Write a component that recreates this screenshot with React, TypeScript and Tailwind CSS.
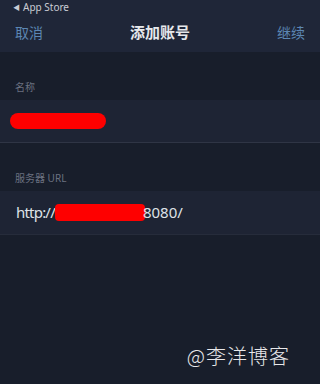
import React from 'react';

// ---------------- Component ----------------
const App: React.FC = () => {
    return (
        <div
            className="w-[322px] h-[387px] bg-white flex flex-col"
            style={{ fontFamily: '"Noto Sans", "Noto Sans CJK SC", sans-serif' }}
        >
            <div className="w-[320px] h-[384px] bg-[#181e2b] flex flex-col overflow-hidden">
                {/* Status + Nav */}
                <div className="bg-[#1f2638] h-[52px] flex flex-col">
                    <div className="h-[14px] flex items-center pl-[13px] text-[10px] leading-none text-[#c9ccd4]">
                        <span className="text-[7px] mr-[3px]">◀</span>
                        App Store
                    </div>
                    <div className="flex-1 flex items-center justify-between px-[15px] pt-[1px] pb-[2px]">
                        <span className="text-[14px] text-[#5c86b3]">取消</span>
                        <span className="text-[15px] font-semibold text-[#e6e8ec]">添加账号</span>
                        <span className="text-[14px] text-[#5c86b3]">继续</span>
                    </div>
                </div>

                {/* Name section */}
                <div className="h-[48px] flex items-end pl-[15px] pb-[5px] text-[10px] text-[#6b7180]">
                    名称
                </div>
                <div className="h-[43px] bg-[#1e2434] border-b border-[#2f3545] flex items-center pl-[10px]">
                    <div className="w-[96px] h-[16px] rounded-full bg-[#fe0000]" />
                </div>

                {/* Server URL section */}
                <div className="h-[48px] flex items-end pl-[15px] pb-[5px] text-[10px] text-[#6b7180]">
                    服务器 URL
                </div>
                <div className="h-[44px] bg-[#1e2434] border-b border-[#262c3b] flex items-center pl-[16px] text-[15px] text-[#dfe2e7]">
                    <span className="tracking-[-0.8px]">http://</span>
                    <span className="inline-block w-[90px] h-[17px] bg-[#fe0000] rounded-[4px] mr-[-2px]" />
                    <span>8080/</span>
                </div>

                {/* Watermark */}
                <div className="flex-1 flex items-end justify-end pr-[30px] pb-[13px]">
                    <span
                        className="text-[20px] text-[#e8e8ea] tracking-[1px]"
                        style={{ fontFamily: '"Noto Sans CJK SC", sans-serif', fontWeight: 300 }}
                    >
                        @李洋博客
                    </span>
                </div>
            </div>
        </div>
    );
};

export default App;
